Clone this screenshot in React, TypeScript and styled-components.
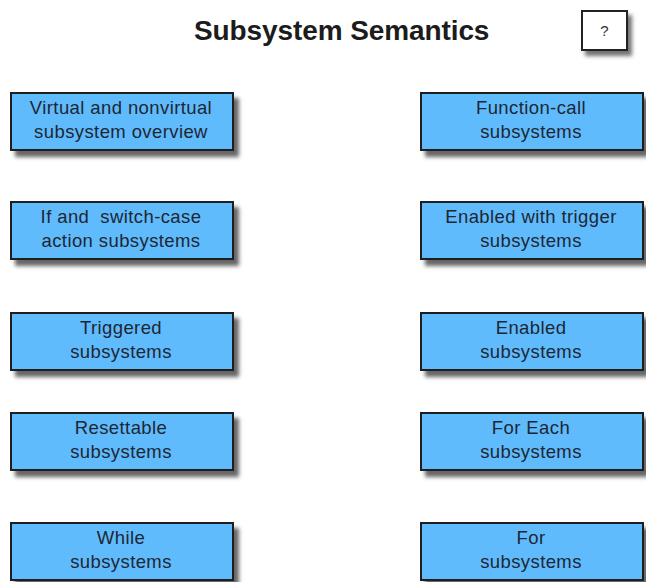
import React from "react";
import styled, { createGlobalStyle } from "styled-components";

const GlobalStyle = createGlobalStyle`
  html, body {
    margin: 0;
    padding: 0;
    background: #ffffff;
  }
  body {
    font-family: "Liberation Sans", Arial, sans-serif;
  }
`;

type Item = { left: string[]; right: string[]; gap: number };

const rows: Item[] = [
  { left: ["Virtual and nonvirtual", "subsystem overview"], right: ["Function-call", "subsystems"], gap: 0 },
  { left: ["If and  switch-case", "action subsystems"], right: ["Enabled with trigger", "subsystems"], gap: 50 },
  { left: ["Triggered", "subsystems"], right: ["Enabled", "subsystems"], gap: 52 },
  { left: ["Resettable", "subsystems"], right: ["For Each", "subsystems"], gap: 41 },
  { left: ["While", "subsystems"], right: ["For", "subsystems"], gap: 51 },
];

const App = () => {
  return (
    <>
      <GlobalStyle />
      <Page>
        <Header>
          <Title>Subsystem Semantics</Title>
          <HelpButton>?</HelpButton>
        </Header>
        <Grid>
          {rows.map((row, i) => (
            <Row key={i} $gap={row.gap}>
              <Block>
                {row.left.map((line) => (
                  <Line key={line}>{line}</Line>
                ))}
              </Block>
              <Block>
                {row.right.map((line) => (
                  <Line key={line}>{line}</Line>
                ))}
              </Block>
            </Row>
          ))}
        </Grid>
      </Page>
    </>
  );
};

const Page = styled.div`
  width: 646px;
  height: 582px;
  overflow: hidden;
  box-sizing: border-box;
  padding: 10px 0 0 10px;
`;

const Header = styled.div`
  display: flex;
  align-items: flex-start;
  height: 82px;
`;

const Title = styled.h1`
  margin: 5px 0 0 184px;
  font-size: 28px;
  line-height: 32px;
  font-weight: bold;
  color: #1c1c1c;
  letter-spacing: -0.1px;
`;

const HelpButton = styled.div`
  margin-left: auto;
  margin-right: 18px;
  width: 47px;
  height: 41px;
  box-sizing: border-box;
  border: 2px solid #222;
  background: #fff;
  display: flex;
  align-items: center;
  justify-content: center;
  font-size: 15px;
  color: #333;
  box-shadow: 4px 5px 4px rgba(0, 0, 0, 0.55);
`;

const Grid = styled.div`
  display: flex;
  flex-direction: column;
`;

const Row = styled.div<{ $gap: number }>`
  display: flex;
  justify-content: space-between;
  width: 634px;
  margin-top: ${(p) => p.$gap}px;
`;

const Block = styled.div`
  width: 224px;
  height: 59px;
  box-sizing: border-box;
  padding: 0 2px 3px 0;
  border: 2px solid #1e1e1e;
  background: #60bbfd;
  display: flex;
  flex-direction: column;
  align-items: center;
  justify-content: center;
  box-shadow: 5px 6px 4px rgba(0, 0, 0, 0.6);
`;

const Line = styled.div`
  font-size: 18.5px;
  line-height: 24px;
  letter-spacing: 0.4px;
  color: #1d2733;
  white-space: pre;
`;

export default App;
